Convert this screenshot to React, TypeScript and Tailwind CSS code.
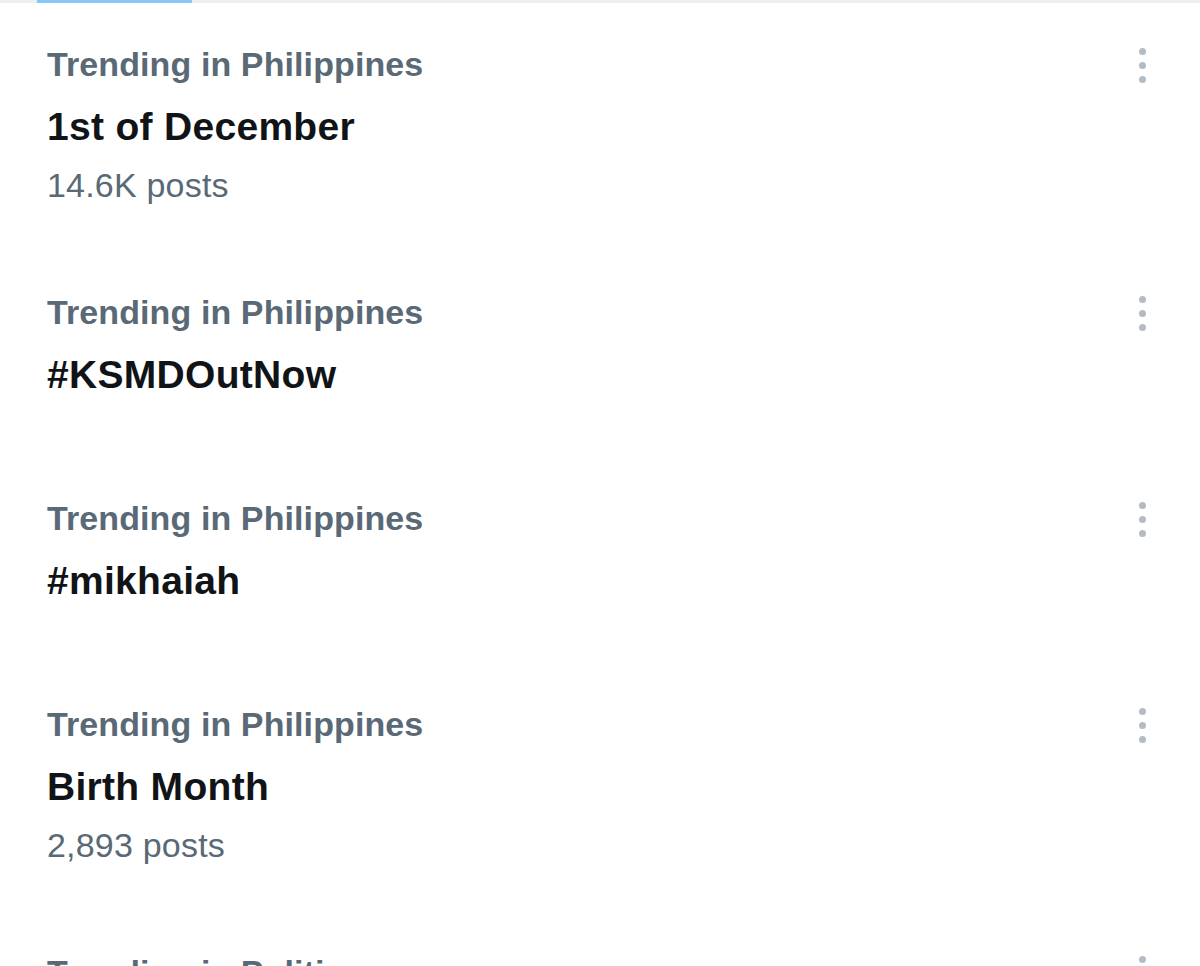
import React from 'react';

type Trend = {
  category: string;
  title: string;
  posts?: string;
};

const trends: Trend[] = [
  { category: 'Trending in Philippines', title: '1st of December', posts: '14.6K posts' },
  { category: 'Trending in Philippines', title: '#KSMDOutNow' },
  { category: 'Trending in Philippines', title: '#mikhaiah' },
  { category: 'Trending in Philippines', title: 'Birth Month', posts: '2,893 posts' },
  { category: 'Trending in Politics', title: '' },
];

function MoreDots() {
  return (
    <div className="flex flex-col items-center gap-[7px] pt-[3px]">
      <span className="block h-[7px] w-[7px] rounded-full bg-[#b3bcc4]" />
      <span className="block h-[7px] w-[7px] rounded-full bg-[#b3bcc4]" />
      <span className="block h-[7px] w-[7px] rounded-full bg-[#b3bcc4]" />
    </div>
  );
}

function TrendRow({ trend }: { trend: Trend }) {
  return (
    <div className="flex items-start justify-between pl-[47px] pr-[54px] pt-[35px] pb-[45px]">
      <div className="flex flex-col">
        <p className="text-[34px] leading-[52px] font-bold tracking-[0.1px] text-[#5a6976]">{trend.category}</p>
        {trend.title && (
          <p className="text-[39px] leading-[74px] font-bold tracking-[0.3px] text-[#111417]">{trend.title}</p>
        )}
        {trend.posts && (
          <p className="text-[34px] leading-[42px] tracking-[0.2px] text-[#5a6976]">{trend.posts}</p>
        )}
      </div>
      <div className="flex h-[52px] items-center">
        <MoreDots />
      </div>
    </div>
  );
}

export default function App() {
  return (
    <div
      className="h-[966px] w-[1200px] overflow-hidden bg-white"
      style={{ fontFamily: '"Liberation Sans", Arial, sans-serif' }}
    >
      <div className="relative h-[3px] w-full bg-[#eceff1]">
        <div className="absolute left-[37px] top-0 h-[3px] w-[155px] bg-[#86c8f3]" />
      </div>
      {trends.map((t, i) => (
        <TrendRow key={i} trend={t} />
      ))}
    </div>
  );
}
